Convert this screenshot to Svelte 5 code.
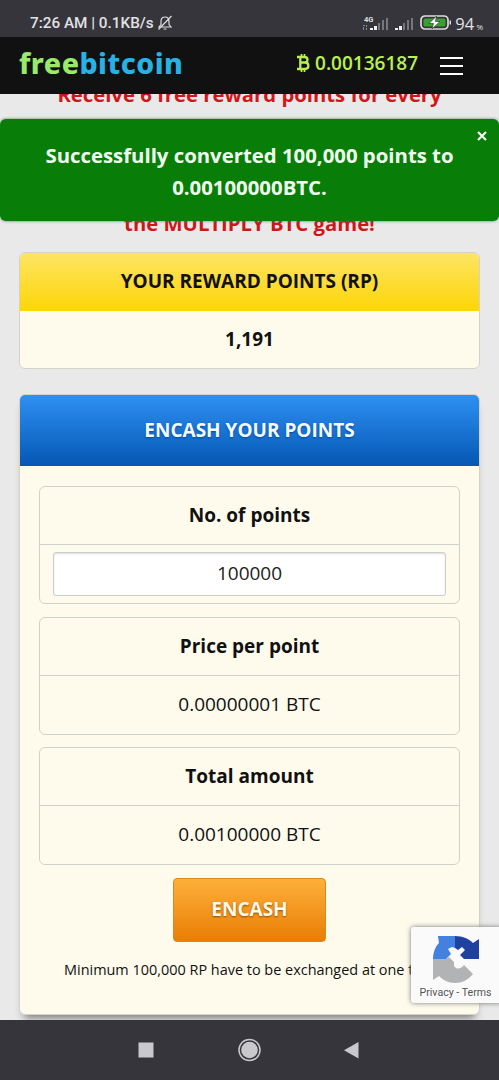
<script lang="ts">
	let balance = '0.00136187';
	let points = '100000';
	let menuOpen = false;
	let showAlert = true;

	const rows = [
		{ label: 'Price per point', value: '0.00000001 BTC' },
		{ label: 'Total amount', value: '0.00100000 BTC' }
	];
</script>

<div class="screen">
	<div class="status">
		<span class="clock">7:26 AM | 0.1KB/s</span>
		<svg class="bell" width="16" height="16" viewBox="0 0 16 16" fill="none" stroke="#ddd" stroke-width="1.2">
			<path d="M2 12h12l-2-2.5V6.5C12 3.700 10.500 2 8 2S4 3.700 4 6.500v3zM6.500 14h3M14.500 1 1.500 14.500" />
		</svg>
		<svg class="signals" width="53" height="17" viewBox="0 0 53 17">
			<text x="2" y="6.500" fill="#ddd" font-family="Roboto" font-size="7.500" font-weight="700">4G</text>
			<path d="M1 10h2v1H1zM1 12h1v3H1zM4 10h1v2H4zM4 13h1v2H4z" fill="#888" />
			<path d="M8 13h3v2H8zM12 11h3v4h-3zM33 13h3v2h-3zM37 11h3v4h-3z" fill="#eee" />
			<path d="M16 8h2v7h-2zM20 5h2v10h-2zM24 3h2v12h-2zM41 8h2v7h-2zM45 5h2v10h-2zM49 3h2v12h-2z" fill="#77767b" />
		</svg>
		<svg class="battery" width="33" height="16" viewBox="0 0 33 16">
			<rect x="1" y="1" width="27" height="13" rx="4" fill="none" stroke="#ddd" stroke-width="1.700" />
			<rect x="3.500" y="3.500" width="22" height="8" rx="1.500" fill="#3aa030" />
			<path d="M29.500 5.500h1.500v4h-1.500z" fill="#ddd" />
			<path d="M16.500 1 9 8.500h4.500L12 14l8-7.500h-4.500z" fill="#fff" stroke="#36353b" stroke-width=".7" />
		</svg>
		<span class="percent">94 <small>%</small></span>
	</div>

	<header>
		<div class="logo"><span>free</span>bitcoin</div>
		<div class="balance">
			<svg width="13" height="18" viewBox="0 0 13 18" fill="none" stroke="#b9ef4f">
				<path d="M0 3h7.500c4 0 4 5.500 0 5.500H3h5c4.500 0 4.500 6.500 0 6.500H0M3.300 3v12" stroke-width="2.300" />
				<path d="M4.500 0v3M7.500 0v3M4.500 15v3M7.500 15v3" stroke-width="1.700" />
			</svg>
			<span>{balance}</span>
		</div>
		<button class="menu" aria-label="Menu" on:click={() => (menuOpen = !menuOpen)}>
			<i></i><i></i><i></i>
		</button>
	</header>

	<main>
		<div class="promo">
			<p>Receive 6 free reward points for every</p>
			<p>the MULTIPLY BTC game!</p>
		</div>

		<section class="rewards">
			<h2>YOUR REWARD POINTS (RP)</h2>
			<div class="total">1,191</div>
		</section>

		<section class="encash">
			<h2>ENCASH YOUR POINTS</h2>
			<div class="content">
				<div class="box">
					<h3>No. of points</h3>
					<div class="field"><input bind:value={points} aria-label="No. of points" /></div>
				</div>
				{#each rows as row}
					<div class="box">
						<h3>{row.label}</h3>
						<div class="value">{row.value}</div>
					</div>
				{/each}
				<button class="submit">ENCASH</button>
				<p class="note">Minimum 100,000 RP have to be exchanged at one time.</p>
			</div>
		</section>
	</main>

	{#if showAlert}
		<div class="alert">
			<p>Successfully converted 100,000 points to</p>
			<p>0.00100000BTC.</p>
			<button aria-label="Close" on:click={() => (showAlert = false)}>
				<svg width="10" height="10" viewBox="0 0 10 10"><path d="m1 1 8 8M9 1 1 9" stroke="#fff" stroke-width="2" /></svg>
			</button>
		</div>
	{/if}

	<div class="captcha">
		<svg width="48" height="49" viewBox="0 0 48 49">
			<path d="M6 1h17v12l-3-1-4 2 3 5-5 5H1C1 18 3 12 7 8z" fill="#4380df" />
			<path d="M23 1c8 0 14 3 18 7l6-4v20H32l-4-4 5-5-3-3-4 3-3-2z" fill="#1f419f" />
			<path d="M1 24h13l3-2 5 5v4c3 4 7 3 10-1l9 9c-5 6-11 9-18 9-7 0-12-3-16-7l-6 4z" fill="#b2b3b4" />
		</svg>
		<span>Privacy - Terms</span>
	</div>

	<nav>
		<svg width="499" height="60" viewBox="0 0 499 60" fill="#c9c8cc">
			<path d="M138.500 22.500h15v15h-15z" />
			<circle cx="249.500" cy="30" r="8.300" />
			<circle cx="249.500" cy="30" r="10.500" fill="none" stroke="#c9c8cc" stroke-width="1.500" />
			<path d="M358.500 22v16.500L344 30.200z" />
		</svg>
	</nav>
</div>

<style>
	:global(body) {
		margin: 0;
	}

	.screen {
		position: relative;
		display: flex;
		flex-direction: column;
		width: 499px;
		height: 1080px;
		overflow: hidden;
		background: #e9e9e9;
		font-family: 'Open Sans', sans-serif;
		color: #111;
	}

	p,
	h2,
	h3 {
		margin: 0;
	}

	button {
		padding: 0;
		border: 0;
		background: none;
	}

	.status {
		flex: none;
		display: flex;
		align-items: center;
		box-sizing: border-box;
		height: 37px;
		padding: 9px 16px 0 30px;
		background: #36353b;
		color: #e2e1e5;
		font: 500 15.3px Roboto, sans-serif;
	}

	.clock {
		width: 125px;
		white-space: nowrap;
	}

	.bell {
		margin-left: 2px;
	}

	.signals {
		margin-left: auto;
	}

	.battery {
		margin-left: 5px;
	}

	.percent {
		margin-left: 2px;
		font: 16.500px 'Open Sans', sans-serif;
	}

	.percent small {
		margin-left: -2px;
		font-size: 8px;
	}

	header {
		position: relative;
		z-index: 1;
		flex: none;
		display: flex;
		align-items: center;
		box-sizing: border-box;
		height: 57px;
		padding: 0 36px 0 19px;
		background: #111;
	}

	.logo {
		margin-top: -5px;
		font: 800 28.5px 'Noto Sans', sans-serif;
		letter-spacing: 0.5px;
		color: #27b2e5;
	}

	.logo span {
		color: #98ea68;
	}

	.balance {
		display: flex;
		align-items: center;
		gap: 5px;
		margin: -5px 22px 0 auto;
		font-size: 19px;
		font-weight: 600;
		color: #b9ef4f;
	}

	.menu i {
		display: block;
		width: 23px;
		height: 2px;
		margin: 6px 0;
		background: #fff;
	}

	main {
		flex: 1;
		min-height: 0;
		padding: 0 19px;
		overflow: hidden;
	}

	.promo {
		margin: -16px 0 13px;
		font-size: 20.3px;
		font-weight: 700;
		line-height: 32px;
		text-align: center;
		color: #cf1719;
		white-space: nowrap;
	}

	.promo p + p {
		margin-top: 97px;
	}

	section {
		box-sizing: border-box;
		border: 1px solid #d3d3ca;
		border-radius: 6px;
		background: #fefbec;
		overflow: hidden;
	}

	h2,
	.total {
		font-size: 19px;
		font-weight: 700;
		text-align: center;
	}

	.rewards {
		height: 117px;
	}

	.rewards h2 {
		height: 58px;
		line-height: 56px;
		background: linear-gradient(#fde563, #fdd507);
	}

	.total {
		line-height: 56px;
	}

	.encash {
		height: 621px;
		margin-top: 25px;
		box-shadow: 0 8px 8px -5px #777;
	}

	.encash h2 {
		margin: -1px -1px 0;
		line-height: 72px;
		color: #f4fbff;
		background: linear-gradient(#2f91f4, #0557b3);
		text-shadow: 0 1px 2px #0448a0;
	}

	.content {
		display: flex;
		flex-direction: column;
		padding: 20px 19px 0;
	}

	.box {
		box-sizing: border-box;
		height: 118px;
		margin-bottom: 12.5px;
		border: 1px solid #cfd2ca;
		border-radius: 6px;
		text-align: center;
		font-size: 19px;
	}

	h3 {
		border-bottom: 1px solid #cfd2ca;
		font-size: 19px;
		font-weight: 700;
		line-height: 57px;
	}

	.value {
		line-height: 57px;
	}

	.field {
		padding: 7px 13px;
	}

	input {
		display: block;
		box-sizing: border-box;
		width: 100%;
		height: 44px;
		padding: 0 0 2px;
		border: 1px solid #ccc;
		border-radius: 3px;
		background: #fff;
		color: #222;
		font: 19px 'Open Sans', sans-serif;
		text-align: center;
		box-shadow: inset 0 1px 2px #ddd;
	}

	.submit {
		align-self: center;
		box-sizing: border-box;
		width: 153px;
		height: 64px;
		padding-bottom: 1px;
		border: 1px solid #d18a26;
		border-radius: 4px;
		background: linear-gradient(#fdb03a, #ea7d05);
		color: #fff9e9;
		font: 700 19px 'Open Sans', sans-serif;
		text-shadow: 0 1px 2px #8a5000;
	}

	.note {
		margin: 17px 0 0 25px;
		font-size: 14.45px;
		line-height: 22px;
		white-space: nowrap;
	}

	.alert {
		position: absolute;
		z-index: 2;
		top: 119px;
		left: 0;
		box-sizing: border-box;
		width: 100%;
		height: 102px;
		padding-top: 20px;
		border-radius: 6px;
		background: #087e08;
		box-shadow: 0 0 3px #4a7a4a;
		color: #f1fff0;
		font-size: 20.35px;
		font-weight: 700;
		line-height: 32px;
		text-align: center;
		white-space: nowrap;
	}

	.alert button {
		position: absolute;
		top: 12px;
		right: 12px;
		line-height: 0;
	}

	.captcha {
		position: absolute;
		top: 927px;
		left: 411px;
		display: flex;
		flex-direction: column;
		align-items: center;
		box-sizing: border-box;
		width: 92px;
		height: 76px;
		padding: 8px 3px 0 0;
		border-radius: 3px;
		background: #fafafa;
		box-shadow: 0 0 5px #777;
		color: #555;
		font: 10.600px Roboto, sans-serif;
	}

	.captcha span {
		margin-top: 2px;
		white-space: nowrap;
	}

	nav {
		position: relative;
		flex: none;
		height: 60px;
		background: #36353b;
	}

	nav svg {
		display: block;
	}
</style>
